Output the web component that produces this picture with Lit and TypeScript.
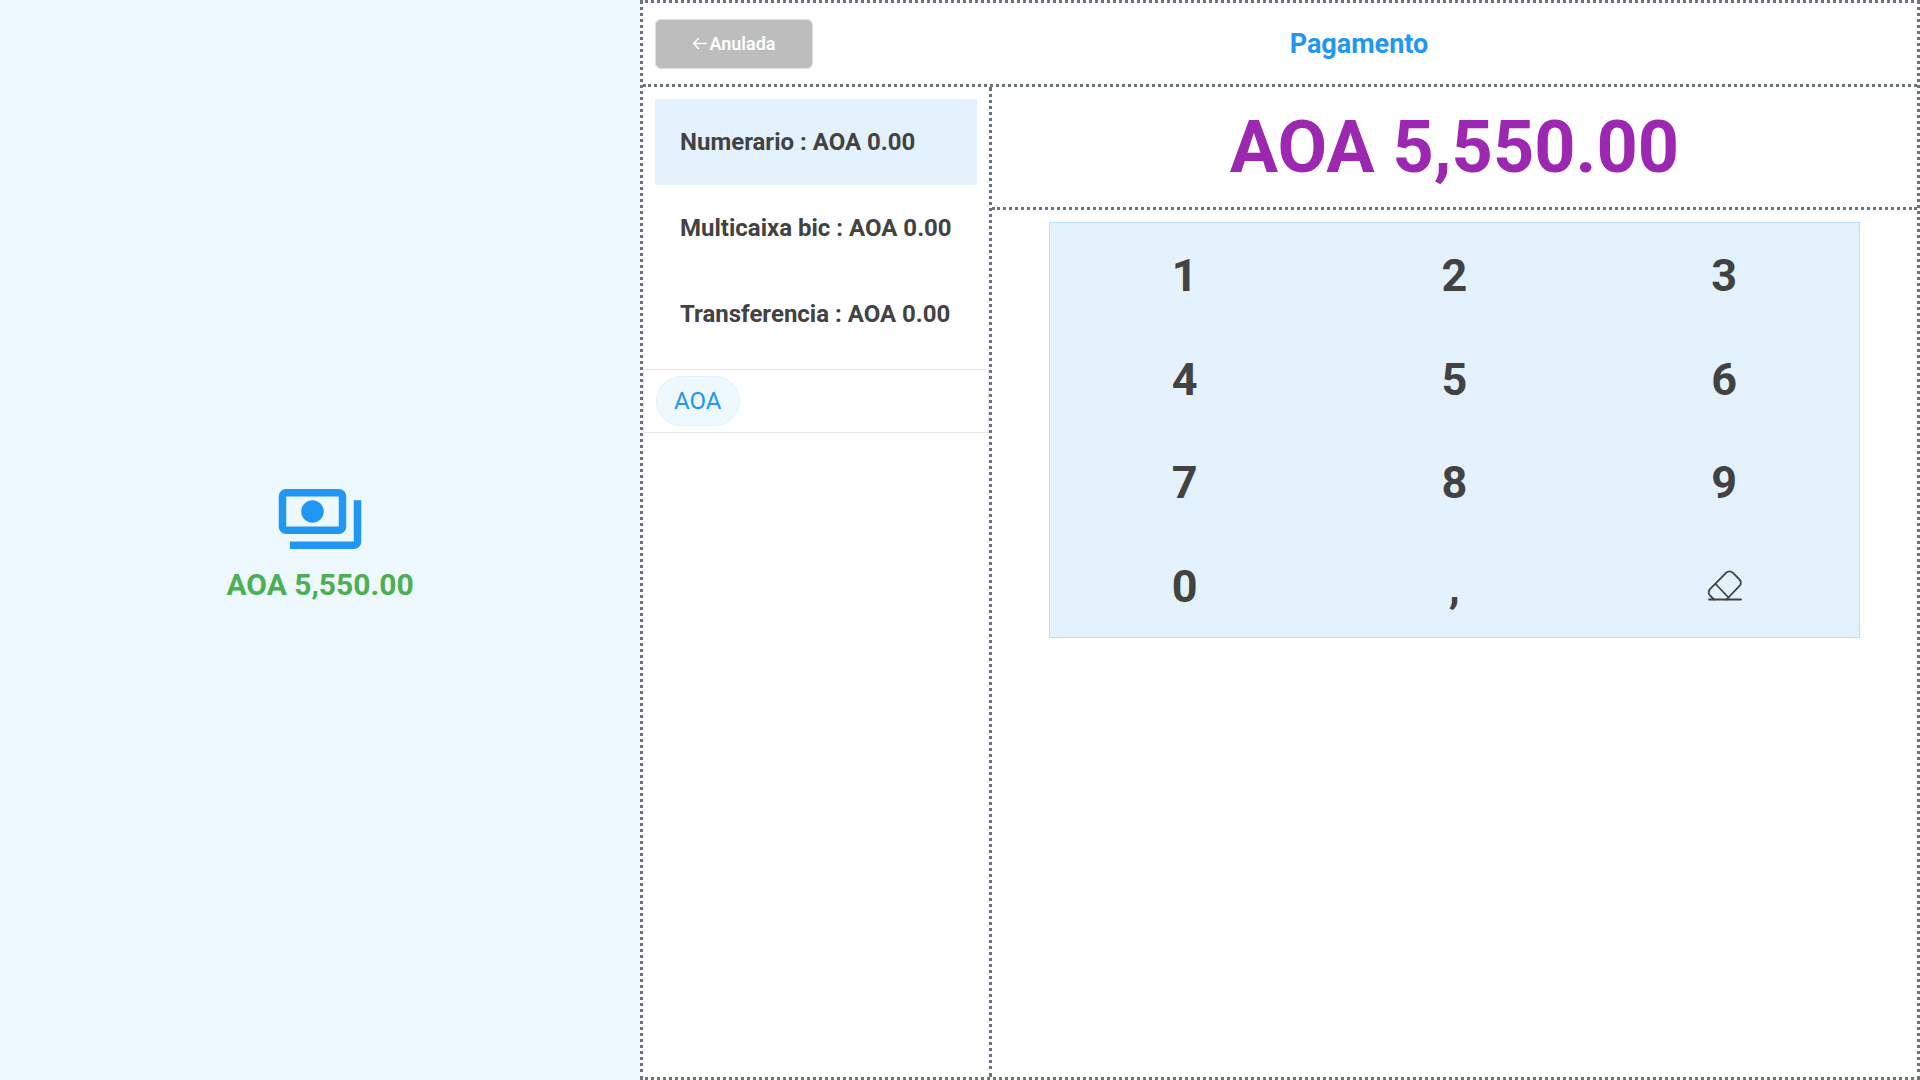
import { LitElement, html, css, svg } from "lit";
import { customElement, state } from "lit/decorators.js";

interface PaymentMethod {
  id: string;
  label: string;
  amount: string;
}

const METHODS: PaymentMethod[] = [
  { id: "cash", label: "Numerario", amount: "AOA 0.00" },
  { id: "card", label: "Multicaixa bic", amount: "AOA 0.00" },
  { id: "transfer", label: "Transferencia", amount: "AOA 0.00" },
];

const KEYS = ["1", "2", "3", "4", "5", "6", "7", "8", "9", "0", ","];

const banknotes = svg`
  <path d="M19 14V6c0-1.100-.9-2-2-2H3c-1.100 0-2 .9-2 2v8c0 1.100.9 2 2 2h14c1.100 0 2-.9 2-2zm-2 0H3V6h14v8zm-7-7c-1.660 0-3 1.340-3 3s1.340 3 3 3 3-1.340 3-3-1.340-3-3-3zm13 0v11c0 1.100-.9 2-2 2H4v-2h17V7h2z"/>`;

@customElement("app-root")
export class AppRoot extends LitElement {
  static styles = css`
    :host {
      display: block;
      font-family: Roboto, "Liberation Sans", sans-serif;
      color: #424242;
    }
    * {
      box-sizing: border-box;
    }
    button {
      font: inherit;
      color: inherit;
      border: 0;
      margin: 0;
      background: none;
      cursor: pointer;
    }
    .page {
      display: grid;
      grid-template-columns: 1fr 2fr;
      min-height: 100vh;
      background: #fff;
    }
    .summary {
      display: flex;
      flex-direction: column;
      align-items: center;
      justify-content: center;
      background: #edf8ff;
    }
    .summary-icon {
      width: 90px;
      height: 90px;
      fill: #2196f3;
    }
    .summary-total {
      margin: 0;
      font-size: 30px;
      line-height: 42px;
      font-weight: 700;
      color: #4caf50;
    }
    .payment {
      display: flex;
      flex-direction: column;
      border: 3px dotted #6b7280;
    }
    .header {
      display: flex;
      align-items: center;
      padding: 16px 12px 15px;
      border-bottom: 3px dotted #6b7280;
    }
    .cancel {
      display: flex;
      align-items: center;
      justify-content: center;
      gap: 1px;
      height: 50px;
      width: 158px;
      padding: 0 0 2px;
      border: 1px solid #e0e0e0;
      border-radius: 6px;
      background: #bdbdbd;
      color: #fff;
      font-size: 18px;
      font-weight: 600;
    }
    .cancel-icon {
      width: 16px;
      height: 16px;
      fill: none;
      stroke: currentColor;
      stroke-width: 1.5;
      stroke-linecap: round;
      stroke-linejoin: round;
    }
    .title {
      flex: 1;
      margin: 0;
      text-align: center;
      font-size: 27px;
      line-height: 32px;
      font-weight: 700;
      color: #2196f3;
    }
    .body {
      flex: 1;
      display: flex;
    }
    .sidebar {
      border-right: 3px dotted #6b7280;
    }
    .methods {
      display: flex;
      flex-direction: column;
      padding: 12px;
    }
    .method {
      padding: 25px;
      text-align: left;
      white-space: nowrap;
      font-size: 24px;
      line-height: 36px;
      font-weight: 700;
    }
    .method.selected {
      background: #e3f2fd;
    }
    .currencies {
      display: flex;
      padding: 6px 12px;
      border: 1px solid #e5e7eb;
    }
    .currency {
      height: 50px;
      padding: 0 18px 0 17px;
      border: 1px solid #e3f2fd;
      border-radius: 25px;
      background: #edf8ff;
      color: #2196f3;
      font-size: 24px;
    }
    .entry {
      flex: 1;
    }
    .amount {
      display: block;
      padding: 17px 16px 15px;
      text-align: center;
      font-size: 72px;
      line-height: 88px;
      font-weight: 700;
      color: #9c27b0;
      border-bottom: 3px dotted #6b7280;
    }
    .pad-area {
      display: flex;
      justify-content: center;
      padding: 12px;
    }
    .pad {
      display: grid;
      grid-template-columns: repeat(3, 1fr);
      width: 90%;
      border: 1px solid #bbdefb;
      background: #e3f2fd;
    }
    .key {
      display: flex;
      align-items: center;
      justify-content: center;
      padding: 19px 0 17px;
      font-size: 45px;
      line-height: 1.5;
      font-weight: 700;
    }
    .key-icon {
      width: 36px;
      height: 36px;
      fill: none;
      stroke: currentColor;
      stroke-width: 1.8;
      stroke-linecap: round;
      stroke-linejoin: round;
    }
  `;

  @state() private selected = "cash";

  render() {
    return html`
      <main class="page">
        <section class="summary">
          <svg class="summary-icon" viewBox="0 0 24 24" aria-hidden="true">${banknotes}</svg>
          <p class="summary-total">AOA 5,550.00</p>
        </section>
        <section class="payment">
          <header class="header">
            <button class="cancel" type="button">
              <svg class="cancel-icon" viewBox="0 0 16 16" aria-hidden="true">
                <path d="M14.500 8.500h-13M6.500 3.500l-5 5 5 5" />
              </svg>
              <span>Anulada</span>
            </button>
            <h1 class="title">Pagamento</h1>
          </header>
          <div class="body">
            <aside class="sidebar">
              <div class="methods">
                ${METHODS.map(
                  (m) => html`<button
                    type="button"
                    class="method ${m.id === this.selected ? "selected" : ""}"
                    @click=${() => (this.selected = m.id)}
                  >${m.label} : ${m.amount}</button>`
                )}
              </div>
              <div class="currencies">
                <button class="currency" type="button">AOA</button>
              </div>
            </aside>
            <div class="entry">
              <output class="amount">AOA 5,550.00</output>
              <div class="pad-area">
                <div class="pad">
                  ${KEYS.map((k) => html`<button class="key" type="button">${k}</button>`)}
                  <button class="key" type="button" aria-label="Apagar">
                    <svg class="key-icon" viewBox="0 0 36 36" aria-hidden="true">
                      <path d="M8 31.500 4 27.500a4.500 4.500 0 0 1 0-6.400L20.300 4.700a4.500 4.500 0 0 1 6.400 0L33.500 11.500a4.500 4.500 0 0 1 0 6.400L20.500 31.500" />
                      <path d="M9.500 16 22.500 29.500M3 31.500h32" />
                    </svg>
                  </button>
                </div>
              </div>
            </div>
          </div>
        </section>
      </main>
    `;
  }
}
